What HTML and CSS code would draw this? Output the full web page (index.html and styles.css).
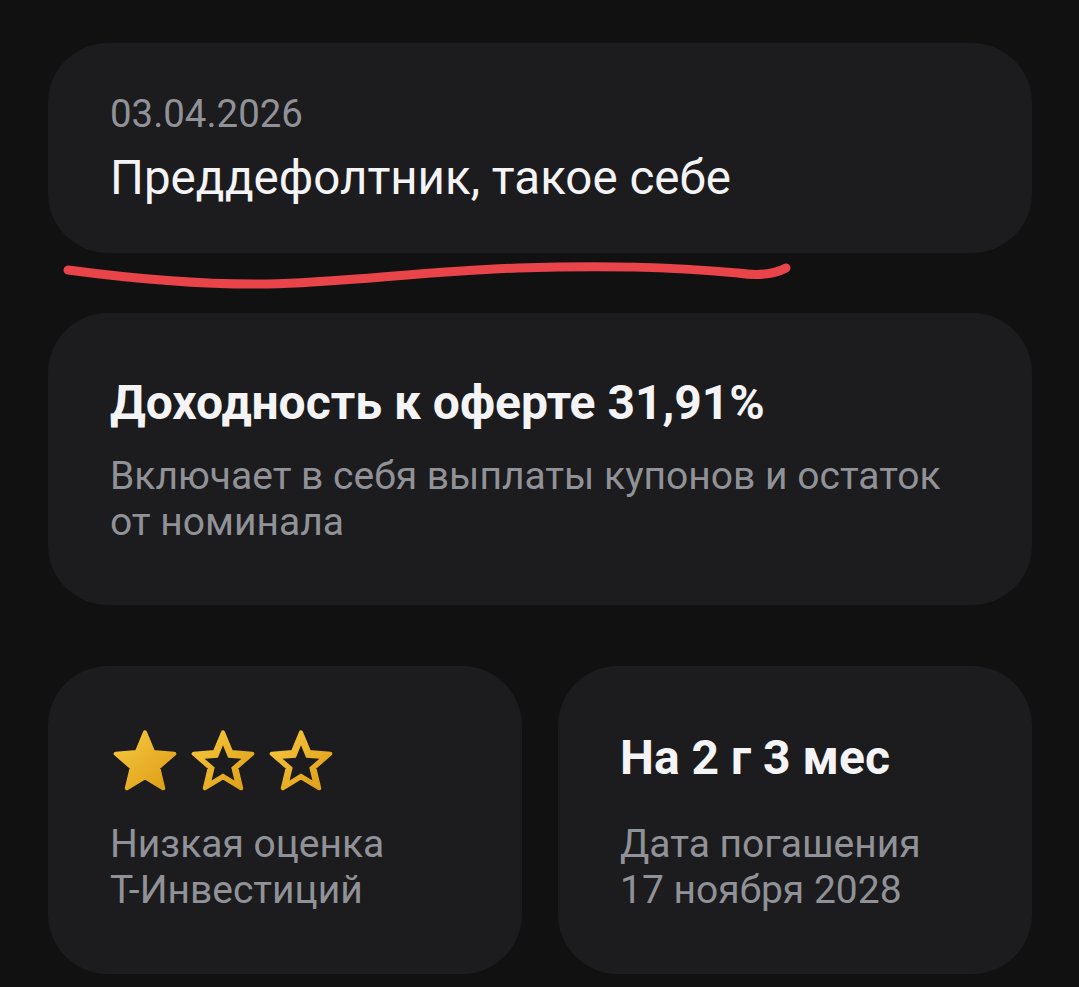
FILE: index.html
```html
<!DOCTYPE html>
<html lang="ru">
<head>
	<meta charset="UTF-8">
	<title>Облигация</title>
	<link rel="stylesheet" href="styles.css">
</head>
<body>
	<div id="wrap">
		<div class="card note">
			<div class="date">03.04.2026</div>
			<div class="note-text">Преддефолтник, такое себе</div>
		</div>

		<div class="mark">
			<svg viewBox="0 0 984 60" preserveAspectRatio="none">
				<path d="M20 17 C 80 25, 150 32, 220 31 S 380 18, 470 15 S 620 14, 690 20 C 710 23, 725 22, 738 15" />
			</svg>
		</div>

		<div class="card yield">
			<h2>Доходность к оферте 31,91%</h2>
			<p class="muted">Включает в себя выплаты купонов и остаток<br>от номинала</p>
		</div>

		<div class="row">
			<div class="card half">
				<div class="stars">
					<svg class="star" viewBox="0 0 100 92">
						<defs>
							<linearGradient id="gold" x1="0" y1="0" x2="1" y2="1">
								<stop offset="0" stop-color="#f8c93e"/>
								<stop offset="1" stop-color="#dc9c16"/>
							</linearGradient>
						</defs>
						<polygon class="shape" points="50,6 61.6,34 91.8,36.4 68.8,56.1 75.9,85.6 50,69.8 24.1,85.6 31.2,56.1 8.2,36.4 38.4,34"/>
					</svg>
					<svg class="star" viewBox="0 0 100 92">
						<polygon class="shape" points="50,6 61.6,34 91.8,36.4 68.8,56.1 75.9,85.6 50,69.8 24.1,85.6 31.2,56.1 8.2,36.4 38.4,34"/>
						<polygon class="hole" transform="translate(50 52) scale(0.63) translate(-50 -50)" points="50,6 61.6,34 91.8,36.4 68.8,56.1 75.9,85.6 50,69.8 24.1,85.6 31.2,56.1 8.2,36.4 38.4,34"/>
					</svg>
					<svg class="star" viewBox="0 0 100 92">
						<polygon class="shape" points="50,6 61.6,34 91.8,36.4 68.8,56.1 75.9,85.6 50,69.8 24.1,85.6 31.2,56.1 8.2,36.4 38.4,34"/>
						<polygon class="hole" transform="translate(50 52) scale(0.63) translate(-50 -50)" points="50,6 61.6,34 91.8,36.4 68.8,56.1 75.9,85.6 50,69.8 24.1,85.6 31.2,56.1 8.2,36.4 38.4,34"/>
					</svg>
				</div>
				<p class="muted small">Низкая оценка<br>Т-Инвестиций</p>
			</div>
			<div class="card half">
				<h2>На 2 г 3 мес</h2>
				<p class="muted small after-title">Дата погашения<br>17 ноября 2028</p>
			</div>
		</div>
	</div>
</body>
</html>
```

FILE: styles.css
```css
* {
	margin: 0;
	padding: 0;
	box-sizing: border-box;
}
body {
	background: #111112;
	color: #f4f4f6;
	font-family: Roboto, "Noto Sans", Arial, sans-serif;
}
#wrap {
	padding: 43px 47px 0 48px;
	display: flex;
	flex-direction: column;
}
.card {
	background: #1c1c1e;
	border-radius: 60px;
	padding: 47px 62px;
}
.date {
	font-size: 38.4px;
	line-height: 48px;
	color: #909298;
}
.note-text {
	font-size: 47.5px;
	line-height: 56px;
	margin-top: 12px;
}
.mark {
	height: 60px;
}
.mark svg {
	display: block;
	width: 100%;
	height: 60px;
}
.mark path {
	fill: none;
	stroke: #e8444a;
	stroke-width: 9;
	stroke-linecap: round;
	stroke-linejoin: round;
}
h2 {
	font-size: 48px;
	line-height: 56px;
	font-weight: 700;
}
.muted {
	font-size: 39px;
	line-height: 46px;
	color: #909298;
}
.yield {
	padding: 62px 62px 60px;
}
.yield .muted {
	margin-top: 22px;
}
.row {
	display: grid;
	grid-template-columns: 1fr 1fr;
	gap: 36px;
	margin-top: 61px;
}
.half {
	height: 308px;
	padding: 62px 62px 0;
}
.stars {
	display: flex;
	gap: 8px;
	height: 64px;
}
.star {
	width: 70px;
	height: 65px;
	display: block;
}
.shape {
	fill: url(#gold);
	stroke: url(#gold);
	stroke-width: 6;
	stroke-linejoin: round;
}
.hole {
	fill: #1c1c1e;
}
.small {
	line-height: 46px;
	margin-top: 29px;
}
.after-title {
	margin-top: 35px;
}
.half h2 {
	margin-top: 2px;
}
```
